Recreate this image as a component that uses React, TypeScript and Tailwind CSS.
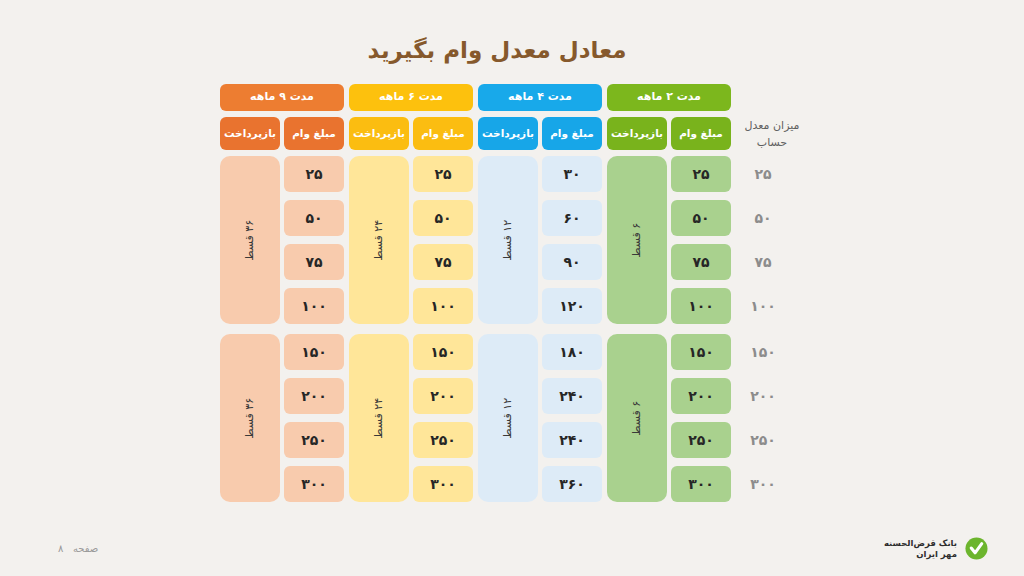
import React from 'react';

type Group = {
  title: string;
  head: string;
  sub: string;
  light: string;
  installments: string;
  amounts: string[];
};

const FONT = { fontFamily: '"DejaVu Sans", "Noto Sans", sans-serif' };

const GROUPS: Group[] = [
  {
    title: 'مدت ۹ ماهه',
    head: 'bg-[#ed7d31]',
    sub: 'bg-[#e9732f]',
    light: 'bg-[#f8cbad]',
    installments: '۳۶ قسط',
    amounts: ['۲۵', '۵۰', '۷۵', '۱۰۰', '۱۵۰', '۲۰۰', '۲۵۰', '۳۰۰'],
  },
  {
    title: 'مدت ۶ ماهه',
    head: 'bg-[#fdc10d]',
    sub: 'bg-[#fbbd11]',
    light: 'bg-[#ffe699]',
    installments: '۲۴ قسط',
    amounts: ['۲۵', '۵۰', '۷۵', '۱۰۰', '۱۵۰', '۲۰۰', '۲۵۰', '۳۰۰'],
  },
  {
    title: 'مدت ۴ ماهه',
    head: 'bg-[#18a9ea]',
    sub: 'bg-[#17a6e8]',
    light: 'bg-[#ddebf7]',
    installments: '۱۲ قسط',
    amounts: ['۳۰', '۶۰', '۹۰', '۱۲۰', '۱۸۰', '۲۴۰', '۲۴۰', '۳۶۰'],
  },
  {
    title: 'مدت ۲ ماهه',
    head: 'bg-[#7cb71d]',
    sub: 'bg-[#79b31c]',
    light: 'bg-[#a9d18e]',
    installments: '۶ قسط',
    amounts: ['۲۵', '۵۰', '۷۵', '۱۰۰', '۱۵۰', '۲۰۰', '۲۵۰', '۳۰۰'],
  },
];

const LABELS = ['۲۵', '۵۰', '۷۵', '۱۰۰', '۱۵۰', '۲۰۰', '۲۵۰', '۳۰۰'];

function Block({ g, values }: { g: Group; values: string[] }) {
  return (
    <div className="grid grid-cols-2 gap-[4px]">
      <div className={`${g.light} rounded-[10px] flex items-center justify-center`}>
        <span dir="rtl" className="-rotate-90 whitespace-nowrap text-[11px] text-[#3a3a3a]">
          {g.installments}
        </span>
      </div>
      <div className="flex flex-col gap-[8px]">
        {values.map((v, i) => (
          <div
            key={i}
            className={`${g.light} h-[36px] rounded-md flex items-center justify-center text-[14px] font-bold text-[#262626]`}
          >
            {v}
          </div>
        ))}
      </div>
    </div>
  );
}

function Column({ g }: { g: Group }) {
  return (
    <div className="w-[124px] flex flex-col">
      <div
        dir="rtl"
        className={`${g.head} h-[27px] rounded-md flex items-center justify-center text-[11px] font-bold text-white`}
      >
        {g.title}
      </div>
      <div className="mt-[6px] grid grid-cols-2 gap-[4px] h-[33px]">
        <div className={`${g.sub} rounded-md flex items-center justify-center text-[10.5px] font-bold text-white whitespace-nowrap`}>
          بازپرداخت
        </div>
        <div className={`${g.sub} rounded-md flex items-center justify-center text-[10.5px] font-bold text-white whitespace-nowrap`}>
          مبلغ وام
        </div>
      </div>
      <div className="mt-[6px]">
        <Block g={g} values={g.amounts.slice(0, 4)} />
      </div>
      <div className="mt-[10px]">
        <Block g={g} values={g.amounts.slice(4)} />
      </div>
    </div>
  );
}

function Logo() {
  return (
    <div className="flex items-center gap-[8px]">
      <div dir="rtl" className="text-right text-[8.5px] font-bold leading-[11px] text-[#2e2e2e]">
        <div>بانک قرض‌الحسنه</div>
        <div>مهر ایران</div>
      </div>
      <svg width="23" height="23" viewBox="0 0 24 24">
        <circle cx="12" cy="12" r="11.5" fill="#6cb52d" />
        <path d="M6.5 11.5 L10.5 16.5 L17.5 7" fill="none" stroke="#fff" strokeWidth="3.2" strokeLinecap="round" strokeLinejoin="round" />
      </svg>
    </div>
  );
}

export default function App() {
  return (
    <div className="w-full h-[576px] bg-[#f3f1ee] flex flex-col" style={FONT}>
      <h1 dir="rtl" className="pt-[35px] pr-[30px] text-center text-[23px] leading-[30px] font-bold text-[#86592c]">
        معادل معدل وام بگیرید
      </h1>

      <div className="mt-[19px] ml-[220px] flex">
        <div className="flex gap-[5px]">
          {GROUPS.map((g) => (
            <Column key={g.title} g={g} />
          ))}
        </div>

        {/* row labels */}
        <div className="ml-[4px] w-[56px] flex flex-col">
          <div className="h-[27px]" />
          <div
            dir="rtl"
            className="mt-[6px] h-[33px] flex flex-col items-center justify-center pl-[18px] whitespace-nowrap text-[11px] leading-[17px] text-[#5f5f5f]"
          >
            <span>میزان معدل</span>
            <span>حساب</span>
          </div>
          <div className="mt-[6px] flex flex-col gap-[8px]">
            {LABELS.slice(0, 4).map((v) => (
              <div key={v} className="h-[36px] flex items-center justify-center text-[14px] font-bold text-[#8c8c8c]">
                {v}
              </div>
            ))}
          </div>
          <div className="mt-[10px] flex flex-col gap-[8px]">
            {LABELS.slice(4).map((v) => (
              <div key={v} className="h-[36px] flex items-center justify-center text-[14px] font-bold text-[#8c8c8c]">
                {v}
              </div>
            ))}
          </div>
        </div>
      </div>

      <div className="flex-1 flex items-end justify-between pl-[58px] pr-[36px] pb-[16px]">
        <div dir="rtl" className="text-[10px] text-[#9a9a9a] pb-[4px]">
          صفحه&nbsp;&nbsp;&nbsp;۸
        </div>
        <Logo />
      </div>
    </div>
  );
}
